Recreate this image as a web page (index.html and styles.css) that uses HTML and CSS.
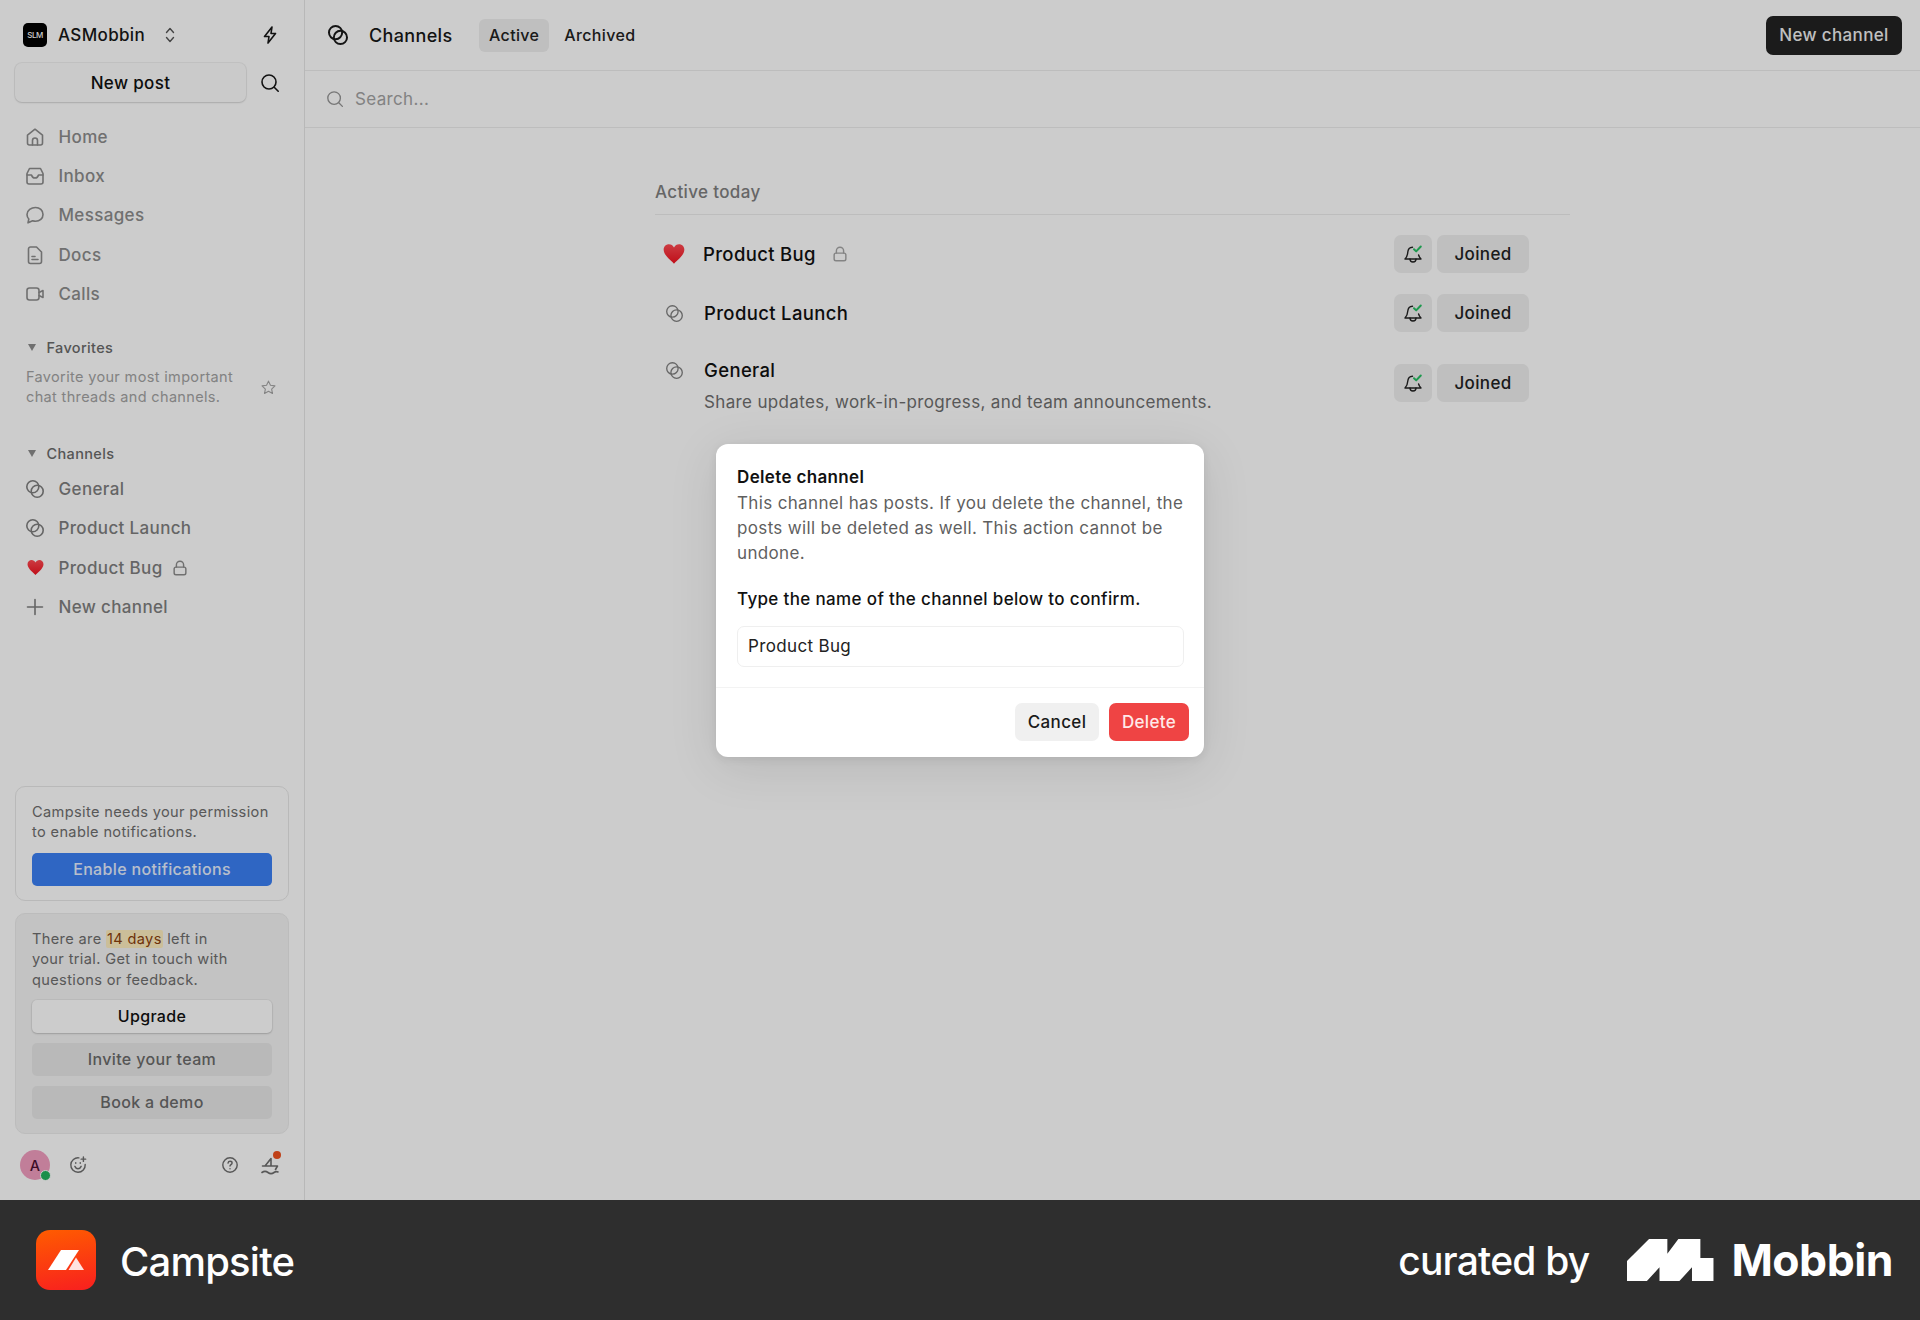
FILE: index.html
```html
<!DOCTYPE html>
<html lang="en">
<head>
  <meta charset="UTF-8">
  <meta name="viewport" content="width=device-width, initial-scale=1.0">
  <title>Channels - Campsite</title>
  <link rel="stylesheet" href="styles.css">
</head>
<body>
  <svg class="sprite" aria-hidden="true">
    <defs>
      <linearGradient id="heart-red" x1="0" y1="0" x2="0" y2="1">
        <stop offset="0" stop-color="#ff4a52"/>
        <stop offset="1" stop-color="#f0121f"/>
      </linearGradient>
    </defs>
    <symbol id="i-channel" viewBox="0 0 20 20"><circle cx="7.800" cy="7.800" r="6"/><circle cx="12.200" cy="12.200" r="6"/></symbol>
    <symbol id="i-search" viewBox="0 0 20 20"><circle cx="9" cy="9" r="7"/><path d="m14.200 14.200 4 4"/></symbol>
    <symbol id="i-home" viewBox="0 0 20 20"><path d="M2.500 8.200 10 2.200l7.500 6V16a2 2 0 0 1-2 2h-11a2 2 0 0 1-2-2z"/><path d="M7.500 18v-4.500a2.500 2.500 0 0 1 5 0V18"/></symbol>
    <symbol id="i-inbox" viewBox="0 0 20 20"><path d="M4.500 2.500h11l2.500 5V16a2 2 0 0 1-2 2H4a2 2 0 0 1-2-2V7.500z"/><path d="M2 9h4.500c.5 2 1.800 3 3.500 3s3-1 3.500-3H18"/></symbol>
    <symbol id="i-chat" viewBox="0 0 20 20"><path d="M10.500 2.500c4.200 0 7.500 2.900 7.500 6.900s-3.300 6.900-7.500 6.900c-1 0-2-.2-2.900-.5L3 17.800l.8-3.800C2.700 12.800 2 11.200 2 9.400 2 5.400 6.300 2.500 10.500 2.500z"/></symbol>
    <symbol id="i-doc" viewBox="0 0 20 20"><path d="M3.500 4a2 2 0 0 1 2-2h6l5 5v9.500a2 2 0 0 1-2 2h-9a2 2 0 0 1-2-2z"/><path d="M7 11.500h3M7 14.500h6"/></symbol>
    <symbol id="i-video" viewBox="0 0 20 20"><rect x="2" y="4" width="12" height="12" rx="2.500"/><path d="M14 8.500 18 6.500v7l-4-2"/></symbol>
    <symbol id="i-lock" viewBox="0 0 20 20"><rect x="3.500" y="9" width="13" height="8.500" rx="2"/><path d="M6 9V6.500a4 4 0 0 1 8 0V9"/></symbol>
    <symbol id="i-heart" viewBox="0 0 20 20"><path class="heart" d="M10 18.800C8.500 16.800.6 11.500.6 6.200.6 3.200 2.800 1.200 5.400 1.200c2 0 3.700 1.100 4.600 3 .9-1.900 2.600-3 4.600-3 2.600 0 4.800 2 4.800 5 0 5.300-7.900 10.600-9.400 12.600z"/></symbol>
    <symbol id="i-bell" viewBox="0 0 20 20"><path d="M9.500 3.200C7 3.300 5 5.300 4.800 8c-.2 3-.8 5-2.800 7h16c-1.200-1.200-2-2.400-2.400-4"/><path d="M7 15c0 4 6 4 6 0"/><path class="check" d="m11 5.200 2.200 2.200L17.800 2.500"/></symbol>
  </svg>

  <div class="app">
    <aside class="sidebar">
      <div class="org-row">
        <span class="org-logo">SLM</span>
        <span class="org-name">ASMobbin</span>
        <svg class="icon chevrons" viewBox="0 0 12 20"><path d="m2.500 7.500 3.500-4 3.500 4M2.500 12.500l3.500 4 3.500-4"/></svg>
        <svg class="icon bolt" viewBox="0 0 20 20"><path d="M12 2 4.500 11.500H9L8 18l7.500-9.500H11z"/></svg>
      </div>
      <div class="post-row">
        <button class="new-post">New post</button>
        <svg class="icon search-dark"><use href="#i-search"/></svg>
      </div>

      <nav class="nav">
        <a class="nav-item"><svg class="icon"><use href="#i-home"/></svg>Home</a>
        <a class="nav-item"><svg class="icon"><use href="#i-inbox"/></svg>Inbox</a>
        <a class="nav-item"><svg class="icon"><use href="#i-chat"/></svg>Messages</a>
        <a class="nav-item"><svg class="icon"><use href="#i-doc"/></svg>Docs</a>
        <a class="nav-item"><svg class="icon"><use href="#i-video"/></svg>Calls</a>
      </nav>

      <div class="section-title favorites-title"><span class="caret"></span>Favorites</div>
      <div class="favorites-empty">
        <p>Favorite your most important chat threads and channels.</p>
        <svg class="icon star" viewBox="0 0 20 20"><path d="m10 2.500 2.300 4.900 5.300.7-3.900 3.700 1 5.300-4.700-2.600-4.700 2.600 1-5.300-3.900-3.700 5.300-.7z"/></svg>
      </div>

      <div class="section-title channels-title"><span class="caret"></span>Channels</div>
      <nav class="nav nav-dark">
        <a class="nav-item"><svg class="icon"><use href="#i-channel"/></svg>General</a>
        <a class="nav-item"><svg class="icon"><use href="#i-channel"/></svg>Product Launch</a>
        <a class="nav-item"><span class="heart-slot"><svg class="icon heart-small"><use href="#i-heart"/></svg></span>Product Bug<svg class="icon lock"><use href="#i-lock"/></svg></a>
        <a class="nav-item"><svg class="icon" viewBox="0 0 20 20"><path d="M10 2.500v15M2.500 10h15"/></svg>New channel</a>
      </nav>

      <div class="spacer"></div>

      <div class="card card-notify">
        <p>Campsite needs your permission to enable notifications.</p>
        <button class="card-btn btn-blue">Enable notifications</button>
      </div>
      <div class="card card-trial">
        <p>There are <mark>14 days</mark> left in<br>your trial. Get in touch with<br>questions or feedback.</p>
        <button class="card-btn btn-white">Upgrade</button>
        <button class="card-btn btn-gray">Invite your team</button>
        <button class="card-btn btn-gray">Book a demo</button>
      </div>

      <div class="user-row">
        <span class="avatar">A<span class="online"></span></span>
        <svg class="icon smile" viewBox="0 0 20 20"><path d="M18 9.500A8 8 0 1 1 11 2.100"/><path d="M6.500 11.500c.8 1.800 2 2.600 3.500 2.600s2.700-.8 3.500-2.600M7.500 7.500v.5M12.500 7.500v.5M16 1v5M13.500 3.500h5"/></svg>
        <span class="spacer"></span>
        <svg class="icon help" viewBox="0 0 20 20"><circle cx="10" cy="10" r="8"/><path d="M7.800 7.800c.2-1.200 1.100-1.900 2.300-1.900 1.300 0 2.200.8 2.200 1.900 0 1.800-2.300 1.800-2.300 3.400M10 14v.3"/></svg>
        <span class="whats-new">
          <svg class="icon" viewBox="0 0 20 20"><path d="M11 3.500 5 11h6zM2.500 11h15l-2 3.500M2 17.500c2-1.500 4-1.500 6 0s4 1.500 6 0 3-1 4-.5"/></svg>
          <span class="red-dot"></span>
        </span>
      </div>
    </aside>

    <main class="main">
      <header class="topbar">
        <svg class="icon channel-head"><use href="#i-channel"/></svg>
        <span class="page-title">Channels</span>
        <span class="tab tab-active">Active</span>
        <span class="tab">Archived</span>
        <span class="spacer"></span>
        <button class="new-channel">New channel</button>
      </header>
      <div class="searchbar">
        <svg class="icon"><use href="#i-search"/></svg>
        <span>Search...</span>
      </div>

      <section class="list">
        <h2 class="list-title">Active today</h2>

        <div class="row">
          <svg class="icon heart-big"><use href="#i-heart"/></svg>
          <div class="row-text"><div class="row-name">Product Bug<svg class="icon lock"><use href="#i-lock"/></svg></div></div>
          <button class="bell-btn"><svg class="icon"><use href="#i-bell"/></svg></button>
          <button class="joined">Joined</button>
        </div>
        <div class="row">
          <svg class="icon row-icon"><use href="#i-channel"/></svg>
          <div class="row-text"><div class="row-name">Product Launch</div></div>
          <button class="bell-btn"><svg class="icon"><use href="#i-bell"/></svg></button>
          <button class="joined">Joined</button>
        </div>
        <div class="row row-tall">
          <svg class="icon row-icon"><use href="#i-channel"/></svg>
          <div class="row-text">
            <div class="row-name">General</div>
            <div class="row-desc">Share updates, work-in-progress, and team announcements.</div>
          </div>
          <button class="bell-btn"><svg class="icon"><use href="#i-bell"/></svg></button>
          <button class="joined">Joined</button>
        </div>
      </section>
    </main>

    <div class="overlay">
      <div class="dialog">
        <div class="dialog-body">
          <h3>Delete channel</h3>
          <p class="dialog-text">This channel has posts. If you delete the channel, the posts will be deleted as well. This action cannot be undone.</p>
          <p class="dialog-confirm">Type the name of the channel below to confirm.</p>
          <input class="dialog-input" type="text" value="Product Bug">
        </div>
        <div class="dialog-actions">
          <button class="btn-cancel">Cancel</button>
          <button class="btn-delete">Delete</button>
        </div>
      </div>
    </div>
  </div>

  <footer class="footer">
    <div class="brand">
      <span class="brand-logo">
        <svg viewBox="0 0 60 60"><path d="M12 40 25 20h18L30 40z" fill="#fff"/><path d="M32.500 40 40 27.500 48 40z" fill="#ffe3e0"/></svg>
      </span>
      <span class="brand-name">Campsite</span>
    </div>
    <div class="curated">
      <span class="curated-by">curated by</span>
      <svg class="mobbin-mark" viewBox="0 0 83 40"><path d="M0 21 21 0H38.500V14L49 0H70V18H82.500V40H62V27L50 40H31V27L19 40H0Z" fill="#fff"/></svg>
      <span class="mobbin-name">Mobbin</span>
    </div>
  </footer>
</body>
</html>
```

FILE: styles.css
```css
* {
  box-sizing: border-box;
}
body {
  margin: 0;
  font-family: Inter, "Liberation Sans", sans-serif;
  letter-spacing: .35px;
  color: #171717;
  background: #fff;
}
button {
  font-family: inherit;
  letter-spacing: inherit;
  border: none;
  cursor: pointer;
}
p, h2, h3 {
  margin: 0;
}
.sprite {
  position: absolute;
  width: 0;
  height: 0;
}
.spacer {
  flex: 1;
}
.icon {
  width: 20px;
  height: 20px;
  flex: none;
  fill: none;
  stroke: currentColor;
  stroke-width: 1.600;
  stroke-linecap: round;
  stroke-linejoin: round;
}
.heart {
  fill: url(#heart-red);
  stroke: none;
}

.app {
  position: relative;
  display: flex;
  height: 1200px;
}

/* sidebar */
.sidebar {
  width: 305px;
  flex: none;
  display: flex;
  flex-direction: column;
  padding: 0 15px;
  border-right: 1px solid #e6e6e6;
  background: #fff;
}
.org-row {
  height: 70px;
  display: flex;
  align-items: center;
  padding: 0 9px 0 8px;
}
.org-logo {
  width: 24px;
  height: 24px;
  border-radius: 5px;
  background: #000;
  color: #fff;
  font-size: 8px;
  font-weight: 500;
  letter-spacing: -0.5px;
  display: flex;
  align-items: center;
  justify-content: center;
}
.org-name {
  font-size: 17px;
  font-weight: 450;
  margin-left: 11px;
  width: 106px;
}
.chevrons {
  width: 12px;
  color: #555;
  stroke-width: 1.400;
}
.bolt {
  margin-left: auto;
}
.post-row {
  display: flex;
  align-items: center;
  justify-content: space-between;
  padding-right: 9px;
  margin-top: -7px;
}
.new-post {
  width: 231px;
  height: 39px;
  font-size: 17px;
  font-weight: 450;
  color: #111;
  background: #fdfdfd;
  border-radius: 7px;
  box-shadow: 0 0 0 1px rgba(0,0,0,.05), 0 1px 2px rgba(0,0,0,.12);
}
.nav {
  display: flex;
  flex-direction: column;
  color: #8c8c8c;
  margin-top: 15px;
}
.nav-item {
  height: 39.300px;
  display: flex;
  align-items: center;
  gap: 13.500px;
  padding-left: 10px;
  font-size: 17px;
  font-weight: 450;
}
.nav-dark {
  margin-top: 0;
  color: #7f7f7f;
}
.heart-slot {
  width: 20px;
  display: flex;
  justify-content: center;
}
.heart-small {
  width: 17px;
  height: 17px;
}
.lock {
  width: 18px;
  height: 18px;
  color: #a6a6a6;
}
.nav-item .lock {
  color: #8c8c8c;
  margin-left: -5px;
}
.section-title {
  display: flex;
  align-items: center;
  gap: 10.500px;
  height: 20px;
  padding-left: 13px;
  font-size: 14.500px;
  font-weight: 450;
  color: #6b6b6b;
}
.favorites-title {
  margin-top: 24px;
}
.channels-title {
  margin-top: 36px;
  margin-bottom: 6px;
}
.caret {
  width: 0;
  height: 0;
  border-left: 4.500px solid transparent;
  border-right: 4.500px solid transparent;
  border-top: 7.500px solid #8c8c8c;
}
.favorites-empty {
  display: flex;
  align-items: center;
  justify-content: space-between;
  padding: 0 12px 0 11px;
  margin-top: 10px;
}
.favorites-empty p {
  width: 225px;
  font-size: 14.500px;
  line-height: 20px;
  color: #a3a3a3;
}
.star {
  width: 17px;
  height: 17px;
  color: #a6a6a6;
  stroke-width: 1.300;
}

.card {
  width: 274px;
  border-radius: 10px;
  padding: 16px;
  font-size: 14.600px;
  line-height: 20.300px;
  color: #737373;
}
.card p {
  color: #6e6e6e;
}
.card-notify {
  height: 115px;
  border: 1px solid #e8e8e8;
  padding-top: 15px;
}
.card-trial {
  height: 221px;
  margin-top: 12px;
  padding-top: 15px;
  background: #f4f4f4;
  border: 1px solid #ececec;
}
.card-btn {
  display: block;
  width: 100%;
  height: 33px;
  border-radius: 5px;
  font-size: 16px;
  font-weight: 450;
}
.btn-blue {
  margin-top: 10px;
  background: #3b80f4;
  color: #e6efff;
}
.btn-white {
  margin-top: 10px;
  background: #fff;
  color: #111;
  box-shadow: 0 0 0 1px rgba(0,0,0,.04), 0 1px 2px rgba(0,0,0,.16);
}
.btn-gray {
  margin-top: 10px;
  background: #e8e8e8;
  color: #6b6b6b;
}
mark {
  background: #feeec0;
  color: #8a3f0c;
  border-radius: 2px;
  padding: 0 1px;
}
.user-row {
  height: 66px;
  display: flex;
  align-items: center;
  padding: 0 9px 4px 5px;
  color: #6e6e6e;
}
.avatar {
  position: relative;
  width: 30px;
  height: 30px;
  border-radius: 50%;
  background: #f29ec0;
  color: #4a1030;
  font-size: 14.500px;
  font-weight: 500;
  display: flex;
  align-items: center;
  justify-content: center;
}
.online {
  position: absolute;
  right: -1px;
  bottom: -1px;
  width: 11px;
  height: 11px;
  border-radius: 50%;
  background: #22b35e;
  border: 1px solid #fff;
}
.smile {
  width: 18px;
  height: 18px;
  margin-left: 19px;
}
.help {
  width: 18px;
  height: 18px;
  margin-right: 21px;
}
.whats-new {
  position: relative;
  display: flex;
}
.red-dot {
  position: absolute;
  top: -4px;
  right: -1px;
  width: 8px;
  height: 8px;
  border-radius: 50%;
  background: #f0521f;
}

/* main */
.main {
  flex: 1;
  background: #fff;
}
.topbar {
  height: 71px;
  display: flex;
  align-items: center;
  padding: 0 18px 0 22px;
  border-bottom: 1px solid #ededed;
}
.channel-head {
  width: 22px;
  height: 22px;
  stroke-width: 1.800;
  color: #1a1a1a;
}
.page-title {
  font-size: 18px;
  font-weight: 450;
  margin-left: 20px;
  margin-right: 25px;
  width: 85px;
}
.tab {
  font-size: 16px;
  font-weight: 450;
  color: #222;
  padding: 0 10px;
  height: 33px;
  display: flex;
  align-items: center;
  border-radius: 6px;
  margin-right: 5px;
}
.tab-active {
  background: #efefef;
}
.new-channel {
  height: 39px;
  width: 136px;
  border-radius: 7px;
  background: #222;
  color: #f0f0f0;
  font-size: 17px;
  font-weight: 450;
}
.searchbar {
  height: 57px;
  display: flex;
  align-items: center;
  gap: 11px;
  padding-left: 21px;
  border-bottom: 1px solid #ededed;
  font-size: 17px;
  color: #a3a3a3;
}
.searchbar .icon {
  width: 18px;
  height: 18px;
  stroke-width: 1.500;
  color: #959595;
}
.list {
  width: 915px;
  margin: 0 auto;
  padding-top: 54px;
}
.list-title {
  font-size: 17px;
  font-weight: 450;
  color: #808080;
  padding-bottom: 12px;
  border-bottom: 1px solid #ededed;
  margin-bottom: 20px;
}
.row {
  height: 38px;
  display: flex;
  align-items: center;
  margin-bottom: 21px;
  padding-right: 41px;
}
.row-tall {
  height: 38px;
  margin-top: 32px;
}
.row > .icon {
  margin-left: 10px;
}
.heart-big {
  width: 22px;
  height: 22px;
  margin-right: 18px;
  margin-left: 8px !important;
}
.row-icon {
  width: 19px;
  height: 19px;
  margin-right: 20px;
  color: #808080;
  stroke-width: 1.400;
}
.row-tall .row-icon {
  align-self: flex-start;
  margin-top: -3.500px;
}
.row-text {
  flex: 1;
}
.row-name {
  display: flex;
  align-items: center;
  gap: 15px;
  font-size: 18.500px;
  font-weight: 450;
  color: #111;
}
.row-tall .row-text {
  margin-top: 5px;
}
.row-desc {
  margin-top: 11px;
  font-size: 17px;
  color: #6e6e6e;
}
.bell-btn {
  width: 38px;
  height: 38px;
  border-radius: 7px;
  background: #efefef;
  color: #222;
  display: flex;
  align-items: center;
  justify-content: center;
  padding: 0;
}
.bell-btn .icon {
  stroke-width: 1.400;
}
.check {
  stroke: #27c063;
  stroke-width: 2;
}
.joined {
  width: 92px;
  height: 38px;
  margin-left: 5px;
  border-radius: 7px;
  background: #efefef;
  color: #222;
  font-size: 17px;
  font-weight: 450;
}

/* dialog */
.overlay {
  position: absolute;
  inset: 0;
  background: rgba(0,0,0,.2);
  display: flex;
  align-items: center;
  justify-content: center;
}
.dialog {
  width: 488px;
  height: 313px;
  background: #fff;
  border-radius: 12px;
  box-shadow: 0 10px 50px rgba(0,0,0,.1), 0 2px 8px rgba(0,0,0,.08);
  display: flex;
  flex-direction: column;
}
.dialog-body {
  padding: 20px 21px 0;
  height: 244px;
  border-bottom: 1px solid #f3f3f3;
}
.dialog h3 {
  font-size: 17px;
  font-weight: 600;
  line-height: 27px;
  color: #111;
}
.dialog-text {
  margin-right: -6px;
  font-size: 17px;
  line-height: 25.400px;
  color: #5f5f5f;
}
.dialog-confirm {
  margin-top: 20px;
  font-size: 17px;
  font-weight: 500;
  line-height: 25px;
  color: #111;
}
.dialog-input {
  display: block;
  width: 447px;
  height: 41px;
  margin-top: 14px;
  padding: 0 10px;
  border: 1px solid #efefef;
  border-radius: 7px;
  font-family: inherit;
  font-size: 17px;
  letter-spacing: inherit;
  color: #222;
}
.dialog-actions {
  display: flex;
  justify-content: flex-end;
  gap: 10px;
  padding: 15px 15px 0 0;
}
.btn-cancel, .btn-delete {
  height: 38px;
  border-radius: 7px;
  font-size: 17px;
  font-weight: 450;
}
.btn-cancel {
  width: 84px;
  background: #f0f0f0;
  color: #1a1a1a;
}
.btn-delete {
  width: 80px;
  background: #ef4444;
  color: #ffe9e9;
}

/* footer */
.footer {
  height: 120px;
  background: #2e2e2e;
  color: #fff;
  display: flex;
  align-items: center;
  justify-content: space-between;
  padding: 0 27px 0 36px;
  letter-spacing: 0;
}
.brand, .curated {
  display: flex;
  align-items: center;
}
.brand-logo {
  width: 60px;
  height: 60px;
  border-radius: 14px;
  background: linear-gradient(170deg, #ff5c00, #f81f1f);
  display: block;
}
.brand-logo svg {
  display: block;
}
.brand-name {
  font-size: 40px;
  font-weight: 500;
  letter-spacing: -0.8px;
  margin-left: 24px;
  padding-top: 2px;
}
.curated-by {
  font-size: 39px;
  font-weight: 500;
  letter-spacing: -0.8px;
}
.mobbin-mark {
  width: 87px;
  height: 42px;
  margin-left: 38px;
}
.mobbin-name {
  font-size: 44.500px;
  font-weight: 700;
  letter-spacing: -0.5px;
  margin-left: 17px;
}
```
